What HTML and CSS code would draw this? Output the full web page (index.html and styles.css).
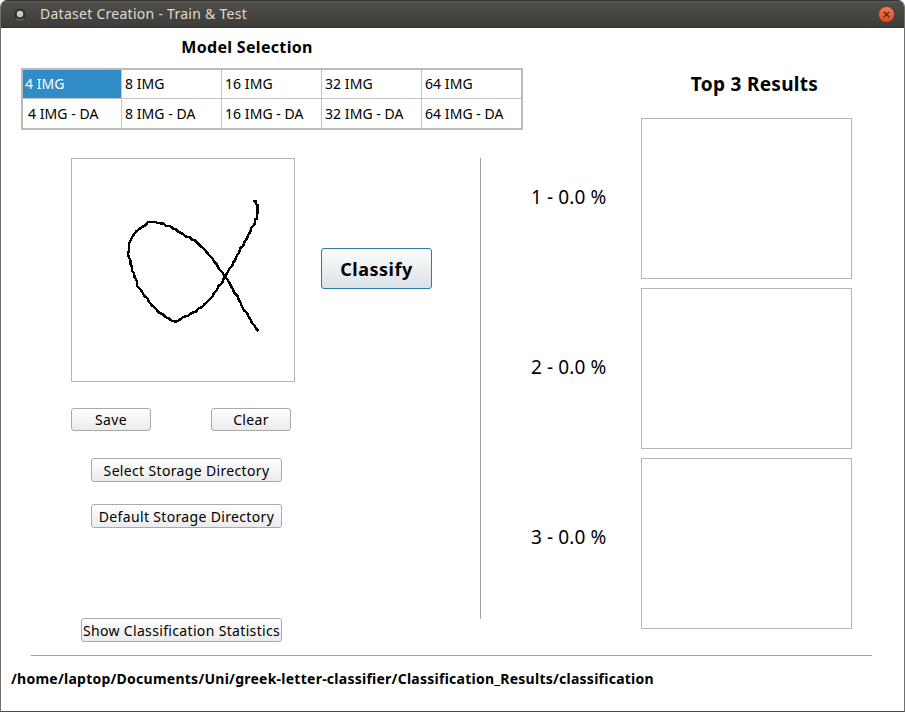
FILE: index.html
```html
<!DOCTYPE html>
<html lang="en">
<head>
<meta charset="utf-8">
<title>Dataset Creation - Train &amp; Test</title>
<link rel="stylesheet" href="styles.css">
</head>
<body>
<div class="window">
  <header class="titlebar">
    <svg class="app-icon" width="14" height="14" viewBox="0 0 14 14"><circle cx="7" cy="7.4" r="6" fill="#34332f"/><path d="M3 11.5a6 6 0 0 0 8 0" fill="none" stroke="#77756f"/><circle cx="7" cy="7" r="3.2" fill="#c9c8c3"/></svg>
    <span class="title">Dataset Creation - Train &amp; Test</span>
    <svg class="close" width="17" height="17" viewBox="0 0 17 17"><defs><linearGradient id="orange" x1="0" y1="0" x2="0" y2="1"><stop offset="0" stop-color="#f67e55"/><stop offset="1" stop-color="#df471b"/></linearGradient></defs><circle cx="8.5" cy="8.5" r="8" fill="url(#orange)" stroke="#33322e" stroke-width=".6"/><path d="M5.7 5.7l5.6 5.6M11.3 5.7l-5.6 5.6" stroke="#51271b" stroke-width="1.3"/></svg>
  </header>
  <main class="content">
    <section class="left">
      <h1 class="model-title"><span>Model Selection</span></h1>
      <div class="models">
        <div class="cell selected">4 IMG</div><div class="cell">8 IMG</div><div class="cell">16 IMG</div><div class="cell">32 IMG</div><div class="cell">64 IMG</div>
        <div class="cell inset">4 IMG - DA</div><div class="cell">8 IMG - DA</div><div class="cell">16 IMG - DA</div><div class="cell">32 IMG - DA</div><div class="cell">64 IMG - DA</div>
      </div>
      <div class="workspace">
        <div class="tools">
          <div class="draw-row">
            <svg class="canvas" viewBox="36 27 666 666" shape-rendering="crispEdges"><path d="M580 155L588 153L589 163L592 165L592 189L591 206L586 208L585 220L579 229L574 233L571 246L564 256L561 265L553 277L550 287L542 293L537 308L530 318L525 332L520 337L517 348L508 356L502 368L492 384L486 400L475 408L471 420L462 429L457 440L443 454L432 464L425 472L414 476L408 485L396 488L384 497L368 502L359 510L349 515L335 512L326 505L316 501L308 492L297 488L289 478L276 466L266 455L262 444L253 438L247 426L238 414L232 409L230 392L224 382L222 370L217 363L216 350L212 345L211 331L206 320L204 309L207 302L207 280L213 269L219 257L230 243L238 237L248 230L256 226L264 216L285 216L294 219L310 221L318 227L331 229L340 236L349 239L355 245L369 252L377 259L389 262L397 269L405 271L418 284L423 289L431 296L440 306L449 317L458 326L463 336L470 343L476 355L486 366L494 378L504 391L509 400L514 410L518 417L524 430L532 437L536 449L542 459L546 471L553 482L562 490L566 500L573 511L575 519L583 525L588 536L596 544" fill="none" stroke="#000" stroke-width="7.3"/></svg>
            <button class="btn classify">Classify</button>
          </div>
          <div class="pair"><button class="btn save">Save</button><button class="btn clear">Clear</button></div>
          <button class="btn wide select">Select Storage Directory</button>
          <button class="btn wide default">Default Storage Directory</button>
          <button class="btn stats">Show Classification Statistics</button>
        </div>
        <div class="divider"></div>
      </div>
    </section>
    <section class="right">
      <h2 class="results-title"><span>Top 3 Results</span></h2>
      <div class="result"><span class="score">1 - 0.0 %</span><div class="preview"></div></div>
      <div class="result"><span class="score">2 - 0.0 %</span><div class="preview"></div></div>
      <div class="result last"><span class="score">3 - 0.0 %</span><div class="preview"></div></div>
    </section>
  </main>
  <footer class="footer"><span class="path">/home/laptop/Documents/Uni/greek-letter-classifier/Classification_Results/classification</span></footer>
</div>
</body>
</html>
```
FILE: styles.css
```css
* { box-sizing: border-box; }
body { margin: 0; background: #fff; color: #000; font: 15px/20px "Noto Sans", sans-serif; }
h1, h2 { margin: 0; }
.window { width: 905px; height: 712px; border: 1px solid #73706c; border-top: 0; border-bottom-color: #4b4a48; border-radius: 7px 7px 0 0; overflow: hidden; background: #fff; }
.titlebar { display: flex; align-items: center; height: 28px; margin: 0 -1px; padding: 0 10px 0 13px; background: linear-gradient(#33322e 0, #33322e 1px, #5c5b55 1px, #4e4d48 3px, #3d3c38 27px, #33322e 27px); color: #dfdbd2; }
.title { margin-left: 13px; font-size: 14px; letter-spacing: .27px; white-space: nowrap; }
.close { margin-left: auto; }
.content { display: flex; height: 627px; }
.left { width: 522px; padding-left: 20px; }
.model-title { display: flex; justify-content: center; width: 452px; height: 40px; padding-top: 9px; font-size: 16px; line-height: 20px; letter-spacing: .32px; }
.models { display: grid; grid-template-columns: 99px 100px 100px 100px 99px; grid-template-rows: 29px 29px; width: 502px; border: 2px solid #bbb; }
.cell { padding-left: 3px; border-right: 1px solid #c3c3c3; border-bottom: 1px solid #c3c3c3; line-height: 28px; font-size: 14px; letter-spacing: .06px; white-space: nowrap; }
.cell:nth-child(5n) { border-right: 0; }
.cell:nth-child(n+6) { border-bottom: 0; line-height: 30px; }
.cell:nth-child(5n+1) { padding-left: 2px; }
.cell.inset { padding-left: 5px; }
.selected { background: #308cc6; color: #fff; }
.workspace { display: flex; margin-top: 28px; padding-left: 50px; }
.tools { display: flex; flex-direction: column; align-items: flex-start; width: 409px; }
.draw-row { display: flex; align-items: flex-start; gap: 26px; }
.canvas { width: 224px; height: 224px; border: 1px solid #b5b5b5; background: #fff; }
.btn { display: flex; align-items: center; justify-content: center; height: 24px; padding: 0; border: 1px solid #aaa; border-radius: 3px; background: linear-gradient(#fff, #ebebeb); color: #000; font: 14px/20px "Noto Sans", sans-serif; letter-spacing: .34px; white-space: nowrap; }
.classify { width: 111px; height: 41px; margin-top: 90px; border-color: #3079a4; background: linear-gradient(#fcfdfd, #dae2e7); font-size: 18px; font-weight: 700; letter-spacing: .5px; }
.pair { display: flex; gap: 60px; margin-top: 26px; }
.pair .btn { width: 80px; height: 23px; }
.wide { width: 191px; margin-left: 20px; padding-top: 2px; }
.select { margin-top: 27px; }
.default { margin-top: 22px; }
.stats { width: 201px; margin: 90px 0 0 10px; padding-top: 2px; }
.divider { width: 1px; height: 461px; background: #a0a0a0; }
.right { width: 329px; }
.results-title { display: flex; justify-content: center; height: 90px; margin-left: 136px; padding-top: 43px; width: 191px; font-size: 19px; line-height: 26px; letter-spacing: .3px; white-space: nowrap; }
.result { display: flex; align-items: flex-start; height: 170px; padding-left: 8px; }
.score { width: 110px; padding-top: 67px; font-size: 19px; line-height: 24px; letter-spacing: .12px; white-space: nowrap; }
.preview { width: 211px; height: 161px; border: 1px solid #b5b5b5; }
.last .preview { height: 171px; }
.footer { width: 841px; margin-left: 30px; border-top: 1px solid #a0a0a0; }
.path { display: block; margin: 13px 0 0 -20px; font-size: 14px; font-weight: 700; letter-spacing: .25px; white-space: nowrap; }
```
